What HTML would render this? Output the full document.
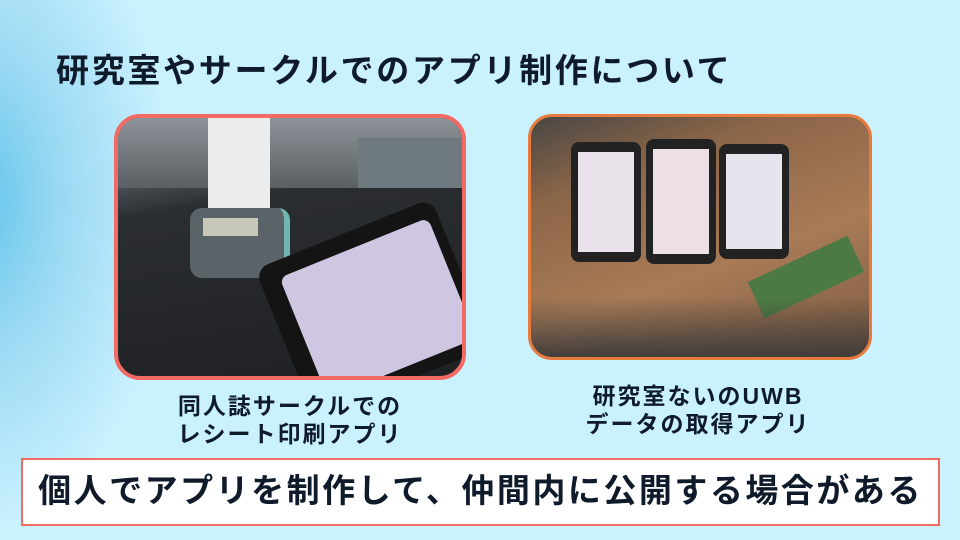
<!DOCTYPE html>
<html><head><meta charset="utf-8"><style>
*{margin:0;padding:0;box-sizing:border-box}
body{width:960px;height:540px;overflow:hidden;position:relative;font-family:"Liberation Sans","Noto Sans CJK JP",sans-serif;
background:radial-gradient(ellipse 200px 330px at -30px 200px,#5ec3ea 0%,#9ad9f3 45%,rgba(200,240,255,0) 100%),#c9f1fe;color:#0f1a2a}
.title{position:absolute;left:56px;top:44px;font-size:33px;font-weight:bold;letter-spacing:2.7px;white-space:nowrap}
.ph{position:absolute;overflow:hidden}
.cap{position:absolute;font-size:23px;font-weight:bold;text-align:center;line-height:28px;letter-spacing:2px;white-space:nowrap}
.box{position:absolute;left:21px;top:458px;width:919px;height:68px;background:#fff;border:2px solid #f26a63;font-size:33px;font-weight:bold;text-align:center;line-height:62px;letter-spacing:2.5px;white-space:nowrap}
</style></head><body>
<div class="title">研究室やサークルでのアプリ制作について</div>

<div class="ph" style="left:114px;top:114px;width:352px;height:266px;border:4px solid #f26a63;border-radius:26px;background:linear-gradient(170deg,#7a7f84 0%,#54595e 18%,#2b2e31 32%,#1e2023 100%)">
 <div style="position:absolute;left:0;top:0;width:352px;height:70px;background:linear-gradient(180deg,#8d9398,#5a5f63)"></div>
 <div style="position:absolute;left:240px;top:20px;width:110px;height:50px;background:#6e7a80"></div>
 <div style="position:absolute;left:90px;top:0;width:62px;height:90px;background:#ececec"></div>
 <div style="position:absolute;left:72px;top:90px;width:100px;height:70px;border-radius:12px;background:#5a6368;border-right:6px solid #6fb8b0"></div>
 <div style="position:absolute;left:85px;top:100px;width:55px;height:18px;background:#c8c8b8"></div>
 <div style="position:absolute;left:160px;top:110px;width:190px;height:160px;background:#141414;border-radius:14px;transform:rotate(-22deg);transform-origin:50% 50%;"></div>
 <div style="position:absolute;left:180px;top:125px;width:160px;height:130px;background:#cfc6e2;border-radius:8px;transform:rotate(-22deg)"></div>
</div>

<div class="ph" style="left:528px;top:114px;width:344px;height:246px;border:3px solid #e87a3e;border-radius:24px;background:linear-gradient(160deg,#4a4744 0%,#8c6648 25%,#a97b57 60%,#7b5a40 100%)">
 <div style="position:absolute;left:40px;top:25px;width:70px;height:120px;background:#222;border-radius:8px"></div>
 <div style="position:absolute;left:47px;top:35px;width:56px;height:100px;background:#eae2ea"></div>
 <div style="position:absolute;left:115px;top:22px;width:70px;height:125px;background:#222;border-radius:8px"></div>
 <div style="position:absolute;left:122px;top:32px;width:56px;height:105px;background:#ece0e6"></div>
 <div style="position:absolute;left:188px;top:27px;width:70px;height:115px;background:#222;border-radius:8px"></div>
 <div style="position:absolute;left:195px;top:37px;width:56px;height:95px;background:#e8e4ee"></div>
 <div style="position:absolute;left:220px;top:140px;width:110px;height:40px;background:#4d7a44;transform:rotate(-25deg)"></div>
 <div style="position:absolute;left:0;top:180px;width:344px;height:66px;background:linear-gradient(180deg,rgba(60,60,60,0),#3a3a3a)"></div>
</div>

<div class="cap" style="left:140px;top:392px;width:300px">同人誌サークルでの<br>レシート印刷アプリ</div>
<div class="cap" style="left:548px;top:382px;width:300px">研究室ないのUWB<br>データの取得アプリ</div>
<div class="box">個人でアプリを制作して、仲間内に公開する場合がある</div>
</body></html>
